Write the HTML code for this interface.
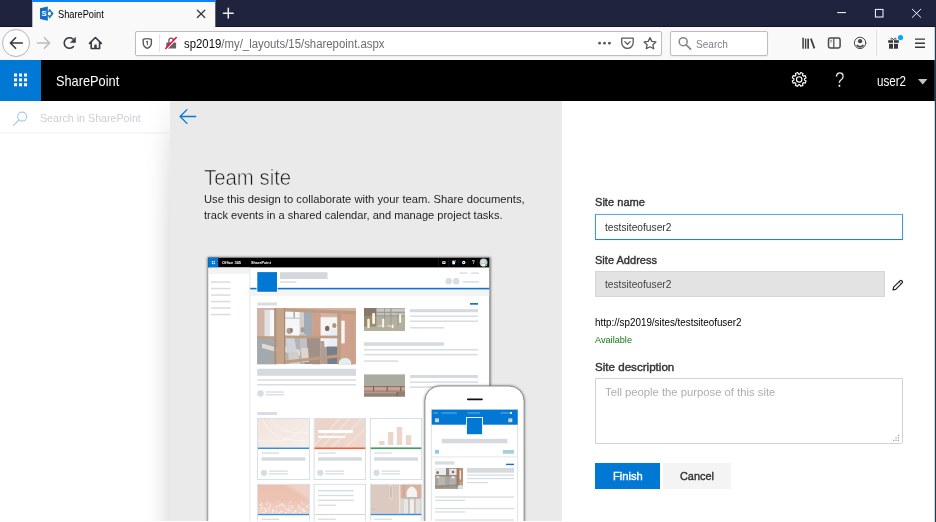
<!DOCTYPE html>
<html lang="en">
<head>
<meta charset="utf-8">
<title>SharePoint</title>
<style>
html,body{margin:0;padding:0;}
body{width:936px;height:522px;overflow:hidden;position:relative;background:#fff;
  font-family:"Liberation Sans",Arial,sans-serif;}
.abs{position:absolute;}
.t{position:absolute;white-space:nowrap;line-height:normal;transform-origin:0 0;}
/* ---------- browser chrome ---------- */
#tabbar{left:0;top:0;width:936px;height:27px;background:#20233e;}
#tabbar .edge{left:0;top:26px;width:936px;height:1px;background:#12142a;}
#tab{left:32px;top:0;width:183px;height:27px;background:#f9f9fa;transform:translateX(0.3px);}
#tab .line{left:0;top:0;width:183px;height:2px;background:#0a84ff;}
#toolbar{left:0;top:27px;width:936px;height:33px;background:#f9f9fa;}
#urlbar{left:134.8px;top:31px;width:524.8px;height:23px;border:1px solid #bdbdc0;border-radius:2px;background:#fff;
  box-shadow:0 1px 2px rgba(0,0,0,.06);}
#searchbar{left:669.8px;top:31px;width:95.8px;height:23px;border:1px solid #bdbdc0;border-radius:2px;background:#fff;
  box-shadow:0 1px 2px rgba(0,0,0,.06);}
#backbtn{left:2.2px;top:29.1px;width:25.8px;height:25.8px;border:0.8px solid #b4b4b6;border-radius:50%;background:#fdfdfd;}
/* ---------- SharePoint suite bar ---------- */
#suite{left:0;top:60px;width:936px;height:41px;background:#000;}
#waffle{left:0;top:60px;width:41px;height:41px;background:#0078d4;}
/* ---------- page ---------- */
#leftpane{left:0;top:101px;width:170px;height:421px;background:#fff;}
#srchline{left:0;top:132px;width:170px;height:2px;background:linear-gradient(90deg,#f3f8fc 0,#f3f8fc 140px,rgba(228,238,248,.75) 170px);}
#graypane{left:170px;top:101px;width:392px;height:521px;background:#eaeaea;box-shadow:0 0 24px rgba(0,0,0,.2);}
#shfade{left:138px;top:101px;width:32px;height:140px;background:linear-gradient(180deg,rgba(255,255,255,.72) 0,rgba(255,255,255,.63) 24px,rgba(255,255,255,.38) 39px,rgba(255,255,255,.21) 59px,rgba(255,255,255,.08) 95px,rgba(255,255,255,0) 140px);}
#rightpane{left:562px;top:101px;width:374px;height:421px;background:#fff;}
#botline{left:0;top:521px;width:936px;height:1px;background:#fdfdfd;}
#winedge{left:935px;top:27px;width:1px;height:495px;background:#1c3d52;}
#winedge2{left:934px;top:27px;width:1px;height:495px;background:rgba(120,140,150,.35);}
/* ---------- form ---------- */
#in1{left:594.6px;top:213.7px;width:306px;height:24px;border:1px solid #1c83d9;border-top-color:#5fa9e6;border-left-color:#3f97e0;border-right-color:#3f97e0;background:#fff;box-shadow:0 0 1px 0 rgba(60,150,225,.35);}
#in2{left:594.6px;top:271.4px;width:288.3px;height:24px;background:#e3e3e3;border:1px solid #d6d6d6;}
#ta{left:594.6px;top:378.3px;width:306.2px;height:63.4px;border:1px solid #d2d2d2;border-radius:0 0 1.5px 0;background:#fff;}
#finish{left:594.7px;top:463px;width:65.3px;height:25.9px;background:#0078d4;}
#cancel{left:663px;top:463px;width:68.4px;height:25.9px;background:#f4f4f4;}
svg{position:absolute;left:0;top:0;overflow:visible;}
</style>
</head>
<body>
<!-- Firefox chrome -->
<div id="tabbar" class="abs"><div class="edge abs"></div></div>
<div id="tab" class="abs"><div class="line abs"></div></div>
<div id="toolbar" class="abs"></div>
<div id="backbtn" class="abs"></div>
<div id="urlbar" class="abs"></div>
<div id="searchbar" class="abs"></div>
<!-- SharePoint suite bar -->
<div id="suite" class="abs"></div>
<div id="waffle" class="abs"></div>
<!-- page panes -->
<div id="leftpane" class="abs"></div>
<div id="graypane" class="abs"></div>
<div id="rightpane" class="abs"></div>
<div id="shfade" class="abs"></div>
<div id="srchline" class="abs"></div>
<!-- form -->
<div id="in1" class="abs"></div>
<div id="in2" class="abs"></div>
<div id="ta" class="abs"></div>
<div id="finish" class="abs"></div>
<div id="cancel" class="abs"></div>
<svg width="936" height="522" viewBox="0 0 936 522">
<defs>
  <filter id="b0" x="-30%" y="-30%" width="160%" height="160%"><feGaussianBlur stdDeviation="0.45"/></filter>
  <filter id="b1p" x="-10%" y="-10%" width="120%" height="120%"><feGaussianBlur stdDeviation="0.85"/></filter>
  <filter id="b1" x="-10%" y="-10%" width="120%" height="120%"><feGaussianBlur stdDeviation="0.7"/></filter>
  <filter id="b2" x="-10%" y="-10%" width="120%" height="120%"><feGaussianBlur stdDeviation="1.6"/></filter>
  <filter id="sh0" x="-10%" y="-10%" width="120%" height="120%"><feGaussianBlur stdDeviation="0.9"/></filter>
  <filter id="sh" x="-10%" y="-10%" width="120%" height="120%"><feGaussianBlur stdDeviation="1.4"/></filter>
  <clipPath id="cp1"><rect x="257.2" y="308" width="98.8" height="56.2"/></clipPath>
  <clipPath id="cp2"><rect x="364" y="308" width="41" height="22.8"/></clipPath>
  <clipPath id="cp3"><rect x="364" y="374.2" width="41" height="22.5"/></clipPath>
  <clipPath id="cpPage"><rect x="200" y="250" width="340" height="271.2"/></clipPath>
  <clipPath id="cpPh"><rect x="435" y="467.8" width="28" height="21"/></clipPath>
  <clipPath id="cpc1"><rect x="258" y="418.8" width="51" height="28.7"/></clipPath>
  <clipPath id="cpc2"><rect x="314.5" y="418.8" width="50.7" height="28.7"/></clipPath>
  <clipPath id="cpc4"><rect x="258" y="484.7" width="51" height="29.1"/></clipPath>
  <clipPath id="cpc6"><rect x="370.7" y="484.7" width="50.6" height="29.1"/></clipPath>
  <linearGradient id="g4" x1="0" y1="0" x2="0" y2="1"><stop offset="0" stop-color="#ecc0ae"/><stop offset="0.55" stop-color="#edc4b3"/><stop offset="1" stop-color="#f2d5ca"/></linearGradient>
  <linearGradient id="g1" x1="0" y1="0" x2="1" y2="1"><stop offset="0" stop-color="#f2e4dd"/><stop offset="1" stop-color="#f6efea"/></linearGradient>
  <linearGradient id="g2" x1="0" y1="0" x2="1" y2="0"><stop offset="0" stop-color="#edd3c8"/><stop offset="1" stop-color="#eed8ce"/></linearGradient>
</defs>
<g clip-path="url(#cpPage)">
<!-- desktop mock shadow + page -->
<rect x="207.3" y="257.1" width="283.4" height="270" fill="#000" opacity="0.5" filter="url(#sh0)"/>
<rect x="208.2" y="257.7" width="281" height="266" fill="#fff"/>
<rect x="208.2" y="257.7" width="281" height="9.7" fill="#000"/>
<rect x="208.2" y="257.7" width="10" height="9.7" fill="#0078d4"/>
<g fill="#fff"><rect x="211.9" y="261.1" width="1.2" height="1.2"/><rect x="213.7" y="261.1" width="1.2" height="1.2"/><rect x="211.9" y="262.9" width="1.2" height="1.2"/><rect x="213.7" y="262.9" width="1.2" height="1.2"/></g>
<!-- suite bar icons -->
<g stroke="#333" stroke-width="0.45"><path d="M438.5 258.5V266.5M448.6 258.5V266.5M458.2 258.5V266.5M468 258.5V266.5M477.6 258.5V266.5"/></g>
<rect x="442.3" y="261.3" width="3.2" height="2.6" fill="#fff"/><rect x="443.2" y="262.2" width="1.4" height="0.8" fill="#000"/>
<rect x="452.3" y="260.7" width="2.8" height="3.6" fill="#fff"/><circle cx="455" cy="261" r="1.1" fill="#2b88d8"/>
<circle cx="463.7" cy="262.5" r="1.7" fill="#fff"/><circle cx="463.7" cy="262.5" r="0.6" fill="#000"/>

<circle cx="483.6" cy="262.5" r="3.9" fill="#b9cdd0"/><circle cx="483.2" cy="261.6" r="1.7" fill="#e9e2d8"/><path d="M480.6 265.4Q483.4 262.6 486.4 265.4Q483.6 267.3 480.6 265.4Z" fill="#f3f3f0"/><circle cx="486.2" cy="265.2" r="1.1" fill="#5fb848"/>
<!-- left nav -->
<rect x="208.9" y="267.6" width="40.4" height="6.4" fill="#f3f3f3"/>
<rect x="249.5" y="267.4" width="0.7" height="256" fill="#dcdcdc"/>
<g fill="#d7dde2"><rect x="211" y="281.3" width="19.5" height="1.5"/><rect x="211" y="287.8" width="19.5" height="1.5"/><rect x="211" y="294.3" width="19.5" height="1.5"/><rect x="211" y="300.8" width="19.5" height="1.5"/><rect x="211" y="307.3" width="19.5" height="1.5"/><rect x="211" y="313.8" width="19.5" height="1.5"/></g>
<!-- site header -->
<rect x="250.2" y="289.4" width="239" height="6.6" fill="#f4f4f4"/>
<rect x="250.2" y="287.8" width="239" height="1.6" fill="#0b74d6"/>
<rect x="256.6" y="271.4" width="21" height="21" fill="#fff"/>
<rect x="257.3" y="272.1" width="19.7" height="19.7" fill="#0078d4"/>
<rect x="280" y="272.2" width="47.5" height="6.8" fill="#d3d8dc"/>
<rect x="280" y="281.3" width="16.5" height="1.5" fill="#d7dde2"/>
<g fill="#d7dde2"><rect x="459.5" y="272.4" width="8" height="1.4"/><rect x="471" y="272.4" width="8" height="1.4"/><circle cx="448.7" cy="281.3" r="3.2"/><circle cx="456.1" cy="281.3" r="3.2"/><rect x="463" y="281.2" width="16" height="1.5"/></g>
<!-- news section -->
<rect x="257.3" y="302.5" width="19.7" height="3" fill="#d7dde2"/>
<rect x="470" y="303" width="8" height="1.7" fill="#0b74d6"/>
<!-- photo 1: office -->
<g clip-path="url(#cp1)">
  <rect x="257.2" y="308" width="98.8" height="56.2" fill="#c9a493"/>
  <g filter="url(#b1)">
  <!-- left brick + lower left -->
  <rect x="256" y="307" width="9" height="31" fill="#c9a595"/>
  <rect x="256" y="338" width="21" height="27" fill="#93979c"/>
  <rect x="257" y="346" width="7" height="18" fill="#8e98a2"/>
  <path d="M262 343.5 L277 347.5 V352 L262 348Z" fill="#d9d3ca"/>
  <!-- window 1 -->
  <rect x="264.5" y="310" width="5" height="27" fill="#d9dde0"/>
  <rect x="269.5" y="310" width="5" height="27" fill="#f5f7f9"/>
  <!-- window 2 -->
  <rect x="285" y="311" width="16.4" height="25" fill="#f3f5f7"/>
  <rect x="293.4" y="311" width="1.6" height="7.4" fill="#98a0ac"/>
  <rect x="285" y="317.6" width="16.4" height="1.2" fill="#b4bcc4"/>
  <rect x="299.6" y="312" width="4.6" height="24" fill="#c9c4c0"/>
  <!-- dark column + brick -->
  <rect x="304" y="312" width="8.2" height="24.6" fill="#8e9aa6"/>
  <rect x="312.2" y="312" width="8.6" height="53" fill="#c48d74"/>
  <rect x="304" y="338" width="16" height="26" fill="#8f7a70"/>
  <!-- lower centre -->
  <rect x="285" y="338" width="19.5" height="26" fill="#a6a3a4"/>
  <path d="M284.6 346 L300 350 V356 L284.6 352Z" fill="#d9d3ca"/>
  <!-- whiteboard -->
  <rect x="320.6" y="317.2" width="17" height="23.8" fill="#f3f3f1"/>
  <rect x="320.6" y="341" width="17" height="23" fill="#a08c82"/>
  <!-- brick right + door glass -->
  <rect x="340.6" y="312" width="16" height="53" fill="#c78f75"/>
  <rect x="341.3" y="320.6" width="3.4" height="22.8" fill="#f4f4f4"/>
  <!-- people left -->
  <ellipse cx="289.2" cy="330.8" rx="2.7" ry="3.1" fill="#a58b7e"/>
  <path d="M285.4 335.4 H294 L297 353 H287Z" fill="#c6cad3"/>
  <ellipse cx="291.4" cy="330.4" rx="1.5" ry="2.3" fill="#7a665d"/>
  <ellipse cx="302.6" cy="329.8" rx="2" ry="2.7" fill="#9a877f"/>
  <path d="M299.4 334 H306.4 L307.6 352 H300.4Z" fill="#b4b6bc"/>
  <path d="M301 348 H308 L309 362 H302Z" fill="#d6cec4"/>
  <path d="M288 352 H298 L300 364 H289Z" fill="#c9c3bd"/>
  <!-- people right -->
  <ellipse cx="327.2" cy="328.4" rx="2.2" ry="2.7" fill="#644a3e"/>
  <ellipse cx="334.3" cy="325.5" rx="2.1" ry="2.6" fill="#a07c69"/>
  <path d="M323.4 332.6 H331 L330.4 347 H324.6Z" fill="#eef0f4"/>
  <path d="M330 329.6 H338.2 L337.6 347 H329.6Z" fill="#e3ebf3"/>
  <path d="M326.6 346.6 H337.6 V364 H327.6Z" fill="#5d6571"/>
  </g>
  <g filter="url(#b0)">
  <!-- wooden frames -->
  <rect x="274.2" y="308" width="2.4" height="56.2" fill="#a07a5d"/>
  <rect x="276.6" y="308" width="7.4" height="56.2" fill="#b99273"/>
  <rect x="284" y="308" width="1.2" height="56.2" fill="#987254"/>
  <path d="M285 308.2 L356 311 L356 314.6 L285 311.4Z" fill="#b18867"/>
  <rect x="257.2" y="336.2" width="17.4" height="2.4" fill="#b18867"/>
  <rect x="285" y="335.6" width="53" height="2.7" fill="#b38a69"/>
  <path d="M285 360.6 L338 354.6 L338 357.4 L285 363.6Z" fill="#b18867"/>
  <rect x="337.3" y="313" width="3.6" height="52" fill="#b08868"/>
  <rect x="351.3" y="317" width="1.8" height="48" fill="#b89070"/>
  <ellipse cx="345" cy="363" rx="6.2" ry="5" fill="#d9ecf0"/>
  </g>
  <rect x="257.2" y="308" width="98.8" height="56.2" fill="#fff" opacity="0.17"/>
</g>
<rect x="257.2" y="368.8" width="98.8" height="7" fill="#d5dade"/>
<g fill="#d7dde2"><rect x="257.2" y="379.3" width="98.8" height="1.5"/><rect x="257.2" y="384" width="98.8" height="1.5"/><circle cx="260.5" cy="393.5" r="3.2"/><rect x="265.7" y="391.4" width="18.3" height="1.3"/><rect x="265.7" y="394.1" width="18.3" height="1.3"/></g>
<!-- photo 2: lamps -->
<g clip-path="url(#cp2)">
  <rect x="364" y="308" width="41" height="22.8" fill="#978b74"/>
  <g filter="url(#b1)">
  <rect x="364" y="308" width="12.6" height="8" fill="#85796a"/>
  <rect x="376.4" y="308" width="29" height="19" fill="#b3afa3"/>
  <rect x="376.8" y="309.2" width="13.4" height="2.4" fill="#c8ccd0"/><rect x="391.6" y="309.2" width="13.4" height="2.4" fill="#c8ccd0"/>
  <rect x="376.8" y="313" width="13.4" height="2" fill="#bfc2c4"/><rect x="391.6" y="313" width="13.4" height="2" fill="#bfc2c4"/>
  <path d="M376.4 312.3H406M376.4 316H406M384.6 308V326M390.9 308V326M398 312V326" stroke="#97917f" stroke-width="0.7"/>
  <rect x="364" y="326.6" width="41" height="4.6" fill="#b3ad9a"/>
  <rect x="377.4" y="325.2" width="4.6" height="1.5" fill="#d2d2ca"/><rect x="387" y="325.2" width="4" height="1.5" fill="#d2d2ca"/>
  </g>
  <g filter="url(#b0)" fill="#fff4dc">
  <rect x="367.3" y="318.8" width="2.4" height="9.2" rx="1"/><rect x="372.2" y="313" width="2.8" height="11" rx="1"/><rect x="382.1" y="318.8" width="2.2" height="8.8" rx="1"/><rect x="399.1" y="313.9" width="2" height="9" rx="1"/><rect x="391.7" y="324.4" width="1.8" height="3.8" rx="0.8"/>
  </g>
</g>
<g fill="#d7dde2"><rect x="410" y="309.2" width="68" height="3" fill="#d5dade"/><rect x="410" y="315.5" width="68" height="1.5"/><rect x="410" y="320.5" width="68" height="1.5"/><rect x="410" y="327" width="34" height="1.5"/>
<rect x="364" y="342.3" width="79.8" height="3.5" fill="#d5dade"/><rect x="364" y="349" width="114" height="1.5"/><rect x="364" y="353.9" width="114" height="1.5"/><rect x="364" y="360.3" width="34" height="1.5"/>
<rect x="410" y="375" width="68" height="3" fill="#d5dade"/><rect x="410" y="381.4" width="68" height="1.5"/><rect x="410" y="386.4" width="68" height="1.5"/></g>
<!-- photo 3: wall + bricks -->
<g clip-path="url(#cp3)">
  <rect x="364" y="374.2" width="41" height="22.5" fill="#a8aca0"/>
  <g filter="url(#b0)">
  <rect x="363" y="386.2" width="43" height="5.4" fill="#c09182"/>
  <rect x="363" y="387.6" width="43" height="2" fill="#d0a595"/>
  <rect x="363" y="386" width="43" height="1" fill="#86766c"/>
  <rect x="363" y="391.4" width="43" height="6" fill="#8f7f77"/>
  <rect x="363" y="392.2" width="34" height="1.1" fill="#b5a198"/>
  <rect x="363" y="395.8" width="43" height="1.2" fill="#a88a80"/>
  <g fill="#6f5f57"><rect x="373" y="386.4" width="1.1" height="5"/><rect x="386.6" y="386.4" width="1.1" height="5"/><rect x="400.2" y="386.4" width="1.1" height="5"/><rect x="396.6" y="392" width="1" height="4"/></g>
  </g>
</g>
<!-- cards -->
<rect x="257.3" y="412" width="19.7" height="3" fill="#d7dde2"/>
<g fill="#fff" stroke="#cfd8e2" stroke-width="0.8">
<rect x="257.6" y="418.4" width="51.8" height="61.2"/><rect x="314.1" y="418.4" width="51.5" height="61.2"/><rect x="370.3" y="418.4" width="51.4" height="61.2"/>
<rect x="257.6" y="484.3" width="51.8" height="45"/><rect x="314.1" y="484.3" width="51.5" height="45"/><rect x="370.3" y="484.3" width="51.4" height="45"/>
</g>
<g clip-path="url(#cpc1)"><rect x="258" y="418.8" width="51" height="28.8" fill="url(#g1)"/>
<path d="M262 418 Q272 444 310 440 M258 440 Q290 446 309 424 M270 418 Q280 436 310 432" stroke="#fbf4f0" stroke-width="0.8" fill="none"/></g>
<g clip-path="url(#cpc2)"><rect x="314.5" y="418.8" width="50.7" height="28.8" fill="url(#g2)"/>
<path d="M314 446 Q330 430 340 418 M320 448 Q338 432 350 418 M330 448 Q348 434 362 418 M344 448 Q356 438 366 428" stroke="#f3e1d9" stroke-width="1.6" fill="none"/></g>
<rect x="318" y="430" width="35" height="3" fill="#fff"/><rect x="318" y="435.9" width="27.4" height="1.9" fill="#fff"/>
<g fill="#ecd6cb"><rect x="379.1" y="441" width="5.4" height="4"/><rect x="388" y="432" width="5.4" height="13"/><rect x="396.8" y="427" width="5.4" height="18"/><rect x="405.8" y="435.2" width="5.4" height="9.8"/></g>
<rect x="258" y="447.5" width="51" height="1.5" fill="#3a8bd9"/><rect x="314.5" y="447.4" width="50.7" height="1.7" fill="#e8623e"/><rect x="370.7" y="447.4" width="50.6" height="1.7" fill="#3f9e5e"/>
<g fill="#d7dde2">
<rect x="261.5" y="452.4" width="17.6" height="1.3"/><rect x="261.5" y="457.3" width="43.8" height="3.4" fill="#d5dade"/><circle cx="264" cy="472.8" r="3.1"/><rect x="269" y="470.5" width="18.7" height="1.3"/><rect x="269" y="473.2" width="18.7" height="1.3"/>
<rect x="318" y="452.4" width="17.6" height="1.3"/><rect x="318" y="457.3" width="43.8" height="3.4" fill="#d5dade"/><circle cx="320.3" cy="472.8" r="3.1"/><rect x="325.2" y="470.5" width="18.7" height="1.3"/><rect x="325.2" y="473.2" width="18.7" height="1.3"/>
<rect x="374.2" y="452.4" width="17.6" height="1.3"/><rect x="374.2" y="457.3" width="43.8" height="3.4" fill="#d5dade"/><circle cx="376.5" cy="472.8" r="3.1"/><rect x="381.4" y="470.5" width="18.7" height="1.3"/><rect x="381.4" y="473.2" width="18.7" height="1.3"/>
</g>
<!-- row 2 -->
<g clip-path="url(#cpc4)"><rect x="258" y="484.7" width="51" height="29.2" fill="url(#g4)"/><path d="M285 484 H310 V500 Z" fill="#f4ddd4" opacity="0.6" filter="url(#b2)"/>
<g fill="#fff" opacity="0.85"><circle cx="262" cy="508" r="0.8"/><circle cx="266" cy="511" r="0.9"/><circle cx="270" cy="506" r="0.7"/><circle cx="273" cy="510.5" r="0.9"/><circle cx="277" cy="507" r="0.8"/><circle cx="281" cy="511.6" r="0.9"/><circle cx="284" cy="505.4" r="0.7"/><circle cx="288" cy="509.6" r="0.9"/><circle cx="292" cy="506.6" r="0.8"/><circle cx="295.6" cy="511" r="0.9"/><circle cx="299" cy="507.4" r="0.8"/><circle cx="303" cy="510.4" r="0.9"/><circle cx="306.6" cy="506" r="0.8"/><circle cx="268" cy="502" r="0.6"/><circle cx="279" cy="501.6" r="0.6"/><circle cx="290" cy="502.4" r="0.6"/><circle cx="301" cy="501.8" r="0.6"/><circle cx="264" cy="512.6" r="0.8"/><circle cx="286" cy="512.8" r="0.8"/><circle cx="300" cy="512.8" r="0.8"/><circle cx="270.3" cy="504.1" r="0.59"/><circle cx="266.2" cy="503.7" r="0.59"/><circle cx="304.4" cy="511.3" r="0.72"/><circle cx="269.6" cy="508.6" r="0.55"/><circle cx="267.1" cy="504.1" r="0.53"/><circle cx="304.9" cy="511.6" r="0.73"/><circle cx="298.5" cy="505.0" r="0.56"/><circle cx="289.8" cy="510.6" r="0.75"/><circle cx="302.5" cy="503.9" r="0.66"/><circle cx="292.1" cy="508.3" r="0.51"/><circle cx="282.2" cy="503.9" r="0.78"/><circle cx="301.8" cy="508.7" r="0.56"/><circle cx="303.9" cy="509.0" r="0.76"/><circle cx="300.9" cy="508.3" r="0.59"/><circle cx="288.4" cy="507.5" r="0.51"/><circle cx="273.8" cy="511.5" r="0.47"/><circle cx="260.8" cy="509.5" r="0.55"/><circle cx="285.2" cy="507.9" r="0.57"/><circle cx="308.4" cy="505.0" r="0.59"/><circle cx="268.6" cy="509.6" r="0.55"/><circle cx="276.3" cy="510.8" r="0.56"/><circle cx="286.4" cy="512.4" r="0.49"/><circle cx="261.6" cy="505.4" r="0.72"/><circle cx="289.3" cy="505.5" r="0.57"/><circle cx="267.4" cy="507.8" r="0.46"/><circle cx="293.4" cy="512.3" r="0.78"/><circle cx="295.2" cy="513.0" r="0.46"/><circle cx="272.9" cy="513.0" r="0.72"/><circle cx="279.0" cy="512.8" r="0.67"/><circle cx="299.4" cy="506.1" r="0.52"/><circle cx="280.7" cy="504.4" r="0.58"/><circle cx="306.6" cy="506.4" r="0.45"/><circle cx="260.7" cy="504.8" r="0.72"/><circle cx="276.6" cy="506.0" r="0.48"/><circle cx="307.6" cy="507.4" r="0.52"/><circle cx="261.5" cy="503.6" r="0.51"/><circle cx="292.3" cy="504.6" r="0.46"/><circle cx="283.0" cy="505.6" r="0.80"/><circle cx="264.6" cy="508.5" r="0.72"/><circle cx="279.0" cy="513.3" r="0.62"/><circle cx="270.6" cy="507.3" r="0.46"/><circle cx="279.6" cy="505.6" r="0.76"/><circle cx="300.1" cy="498.5" r="0.31" opacity="0.6"/><circle cx="271.2" cy="496.2" r="0.34" opacity="0.6"/><circle cx="270.1" cy="501.8" r="0.33" opacity="0.6"/><circle cx="261.1" cy="502.4" r="0.41" opacity="0.6"/><circle cx="308.0" cy="497.6" r="0.48" opacity="0.6"/><circle cx="291.2" cy="501.1" r="0.45" opacity="0.6"/><circle cx="283.2" cy="494.8" r="0.34" opacity="0.6"/><circle cx="302.2" cy="502.1" r="0.48" opacity="0.6"/><circle cx="275.3" cy="499.9" r="0.46" opacity="0.6"/><circle cx="290.6" cy="501.3" r="0.41" opacity="0.6"/><circle cx="291.2" cy="500.2" r="0.35" opacity="0.6"/><circle cx="304.6" cy="502.6" r="0.31" opacity="0.6"/><circle cx="307.1" cy="502.7" r="0.43" opacity="0.6"/><circle cx="260.7" cy="502.1" r="0.33" opacity="0.6"/><circle cx="306.9" cy="500.0" r="0.31" opacity="0.6"/><circle cx="266.9" cy="499.7" r="0.41" opacity="0.6"/><circle cx="295.8" cy="502.3" r="0.34" opacity="0.6"/><circle cx="258.7" cy="502.3" r="0.30" opacity="0.6"/></g></g>
<g fill="#d7dde2"><rect x="318" y="490" width="35.6" height="1.4"/><rect x="318" y="494.8" width="35.6" height="1.4"/><rect x="318" y="499.6" width="35.6" height="1.4"/><rect x="318" y="504.6" width="18" height="1.4"/></g>
<rect x="314.5" y="514" width="50.7" height="0.9" fill="#c9ced3"/>
<g clip-path="url(#cpc6)"><rect x="370.7" y="484.7" width="50.6" height="29.2" fill="#dcc9c0"/>
<g filter="url(#b0)"><rect x="400" y="484" width="22" height="14" fill="#d9b3a0"/><rect x="399.2" y="484" width="1.2" height="30" fill="#f1ece8"/><rect x="403" y="484" width="1.4" height="13" fill="#c9a898"/>
<rect x="389" y="485.4" width="3.6" height="13.6" fill="#e6d8d0"/><rect x="389.8" y="486.4" width="2" height="11.4" fill="#d0bcb2"/>
<path d="M406.6 497.6 V491.4 Q411.8 481.6 417 491.4 V497.6Z" fill="#f3f3f1"/>
<rect x="401" y="497.4" width="20.6" height="16.6" fill="#d9d5d1"/><rect x="401" y="497.2" width="20.6" height="1.2" fill="#b9aea8"/>
<rect x="404" y="499.6" width="4.4" height="14" fill="#e9e7e4"/><rect x="409.8" y="499.6" width="4.4" height="14" fill="#f0efed"/><rect x="415.8" y="499.6" width="4" height="14" fill="#e4e0dc"/>
<path d="M408.9 498V514M414.8 498V514" stroke="#b5aaa4" stroke-width="0.8"/>
<rect x="371" y="508.4" width="4.4" height="1.6" fill="#c4c4c8"/></g></g>
<rect x="258" y="513.8" width="51" height="1.4" fill="#3a8bd9"/><rect x="370.7" y="513.8" width="50.6" height="1.4" fill="#3a8bd9"/>
<g fill="#d7dde2"><rect x="261.5" y="518.6" width="17.6" height="1.3"/><rect x="318" y="518.6" width="17.6" height="1.3"/><rect x="374.2" y="518.6" width="17.6" height="1.3"/></g>
<!-- right edge shadow of desktop mock -->
<!-- phone -->
<rect x="423.9" y="385.2" width="101.2" height="150" rx="16" fill="#000" opacity="0.34" filter="url(#sh0)"/>
<rect x="424.9" y="386" width="99.2" height="150" rx="15" fill="#fff" stroke="#8e8e8e" stroke-width="1"/>
<rect x="467" y="398.6" width="15.8" height="1.6" rx="0.8" fill="#111"/>
<rect x="431.7" y="409.7" width="86" height="120" fill="#fff" stroke="#d6d6d6" stroke-width="0.7"/>
<rect x="431.7" y="409.7" width="86" height="15" fill="#0078d4"/>
<g fill="#58a8e8"><rect x="433.4" y="412.4" width="4.6" height="1.2"/><rect x="441.4" y="412.4" width="15.4" height="1.2"/><rect x="467.6" y="412.4" width="12.6" height="1.2"/><rect x="500.6" y="412.4" width="8" height="1.2"/></g>
<rect x="509.8" y="412.1" width="2.2" height="1.7" fill="#fff"/>
<rect x="435" y="418.4" width="4" height="3.8" fill="#cfd4d8"/><rect x="508.3" y="418.4" width="4" height="3.8" fill="#cfd4d8"/>
<rect x="466" y="417" width="17" height="18.1" fill="#fff"/>
<rect x="466.9" y="417.9" width="15.2" height="16.3" fill="#0078d4"/>
<rect x="441.7" y="438.8" width="65.8" height="4.5" fill="#d5dade"/>
<rect x="435" y="450" width="4" height="3.7" fill="#8ec6ee"/><rect x="502.8" y="450" width="11.2" height="3.7" fill="#a3d1dd"/>
<rect x="432" y="456.2" width="85.4" height="1.3" fill="#ececec"/>
<rect x="435" y="461.3" width="19.5" height="3.3" fill="#d7dde2"/>
<rect x="506" y="463.7" width="8" height="1.4" fill="#0b74d6"/>
<g clip-path="url(#cpPh)"><rect x="435" y="467.8" width="28" height="21" fill="#b9a293"/>
<g filter="url(#b0)"><rect x="435" y="468" width="11" height="8" fill="#e9ecec"/><rect x="449" y="469" width="8" height="7" fill="#e4e6e6"/><rect x="446" y="468" width="3.2" height="21" fill="#8f8a86"/>
<rect x="435" y="476.6" width="22" height="9" fill="#a3a5a5"/><rect x="438" y="477" width="7" height="8" fill="#b9b6b0"/><rect x="449.6" y="477" width="6" height="8" fill="#aeb0b2"/>
<rect x="435" y="486.4" width="23" height="3" fill="#8d9aa0"/>
<ellipse cx="437.6" cy="472.6" rx="1.2" ry="1.6" fill="#7d6a60"/><ellipse cx="453" cy="472" rx="1.2" ry="1.5" fill="#7d6a60"/><rect x="436.6" y="474" width="2.6" height="4" fill="#dfe3e8"/><rect x="451.6" y="473.4" width="3" height="5" fill="#e6e9ee"/>
<rect x="435" y="475" width="22" height="1.2" fill="#a98465"/><path d="M435 485.8 L457 484.4 V485.8 L435 487.2Z" fill="#a98465"/>
<rect x="456.6" y="468" width="2.6" height="21" fill="#a47c5e"/>
<rect x="459.2" y="468" width="4" height="14" fill="#b98f78"/><rect x="459.6" y="470.4" width="1.4" height="9" fill="#e9e9e9"/><ellipse cx="460.4" cy="487.4" rx="2.8" ry="2.4" fill="#d4e6ea"/></g></g>
<g fill="#d7dde2"><rect x="467" y="468" width="47" height="4.7" fill="#d5dade"/><rect x="467" y="474.4" width="47" height="1.3"/><rect x="467" y="477.9" width="47" height="1.3"/><rect x="467" y="481.9" width="21" height="1.3"/>
<rect x="435" y="496.4" width="79" height="1.3"/><rect x="435" y="499.7" width="30" height="1.3"/><rect x="435" y="507.9" width="79" height="1.3"/><rect x="435" y="511.3" width="30" height="1.3"/><rect x="435" y="519.4" width="79" height="1.3"/></g>
</g>
</svg>

<svg width="936" height="522" viewBox="0 0 936 522" fill="none" stroke-linecap="round" stroke-linejoin="round">
<!-- tab favicon: SharePoint logo -->
<g>
  <path d="M47.7 13.6 L49.6 9.6 L52.9 13.6 L49.6 17.7 Z" fill="#f9f9fa" stroke="#0f6fc6" stroke-width="1.1"/>
  <circle cx="49.3" cy="13.6" r="2.3" fill="#f9f9fa" stroke="#0f6fc6" stroke-width="0.9"/>
  <path d="M40 8.2 L47.8 6.6 L47.8 20.8 L40 19.1 Z" fill="#0f6fc6" stroke="none"/>
  <text x="41.4" y="16.3" font-family="Liberation Sans, Arial, sans-serif" font-size="7.6" font-weight="700" fill="#ffffff" stroke="none">S</text>
</g>
<!-- tab close / new tab -->
<path d="M197.4 10.2 L204.8 17.5 M204.8 10.2 L197.4 17.5" stroke="#38383d" stroke-width="1.25"/>
<path d="M223.4 13.2 H233.2 M228.3 8.3 V18.1" stroke="#f0f0f4" stroke-width="1.5"/>
<!-- window controls -->
<path d="M837.2 12.6 H846" stroke="#fff" stroke-width="1" stroke-linecap="butt"/>
<rect x="875.4" y="9.4" width="7.6" height="7.6" stroke="#fff" stroke-width="1" stroke-linejoin="miter"/>
<path d="M912.3 9.2 L920.8 17.4 M920.8 9.2 L912.3 17.4" stroke="#fff" stroke-width="0.95"/>
<!-- nav buttons -->
<path d="M22.3 43 H10.6 M15.6 37.8 L10.4 43 L15.6 48.3" stroke="#38383d" stroke-width="1.6"/>
<path d="M37.4 43 H49.4 M44.4 37.8 L49.6 43 L44.4 48.3" stroke="#bcbcbe" stroke-width="1.6"/>
<path d="M73.5 46.5 A5.3 5.3 0 1 1 73 39" stroke="#38383d" stroke-width="1.55"/>
<path d="M75.5 37.4 V42.6 H70.6 Z" stroke="#38383d" stroke-width="0.5" fill="#38383d"/>
<path d="M89.5 43.4 L95.4 37.5 L101.3 43.4 M91.2 42.6 V48.5 H99.6 V42.6" stroke="#38383d" stroke-width="1.6"/>
<rect x="94.3" y="44.6" width="2.4" height="4" fill="#38383d" stroke="none"/>
<!-- url bar: shield, separator, insecure lock -->
<path d="M143.2 39.4 Q147.3 37.9 151.4 39.4 V42.8 C151.4 45.8 149.6 47.5 147.3 48.4 C145 47.5 143.2 45.8 143.2 42.8 Z" stroke="#55555a" stroke-width="1.35"/>
<path d="M146.5 41.7 L147.4 41.2 V44.8" stroke="#55555a" stroke-width="1.05"/>
<path d="M159.5 34 V52" stroke="#e3e3e6" stroke-width="1" stroke-linecap="butt"/>
<rect x="166.3" y="42.4" width="9.8" height="6.2" rx="0.9" fill="#636367" stroke="none"/>
<path d="M168.9 42.6 V40.4 A2.3 2.3 0 0 1 173.5 40.4 V42.6" stroke="#636367" stroke-width="1.4"/>
<path d="M166.6 49 L177.2 38" stroke="#ffffff" stroke-width="1.3"/>
<path d="M165.7 48.4 L176.3 37.4" stroke="#ff0039" stroke-width="1.45"/>
<!-- page actions -->
<circle cx="599.6" cy="43.2" r="1.4" fill="#5a5a5e"/><circle cx="604.5" cy="43.2" r="1.4" fill="#5a5a5e"/><circle cx="609.4" cy="43.2" r="1.4" fill="#5a5a5e"/>
<path d="M621.7 38.2 H633.2 V42.6 A5.75 5.75 0 0 1 621.7 42.6 Z" stroke="#5a5a5e" stroke-width="1.3"/>
<path d="M624.8 41.6 L627.4 44.2 L630.1 41.6" stroke="#5a5a5e" stroke-width="1.3"/>
<path d="M650 37.6 L651.8 41.4 L655.9 41.9 L652.9 44.7 L653.7 48.8 L650 46.8 L646.3 48.8 L647.1 44.7 L644.1 41.9 L648.2 41.4 Z" stroke="#5a5a5e" stroke-width="1.3"/>
<!-- search bar magnifier -->
<circle cx="683.2" cy="41.7" r="4" stroke="#85858a" stroke-width="1.5"/>
<path d="M686.2 44.8 L690.6 49.2" stroke="#85858a" stroke-width="1.7"/>
<!-- library, sidebar, account, gift, menu -->
<g fill="#3e3e43" stroke="none"><rect x="802.3" y="37.7" width="1.5" height="11"/><rect x="804.9" y="38.6" width="1.4" height="10.1"/><rect x="807.3" y="38.6" width="1.7" height="10.1"/></g>
<path d="M810.9 38.6 L814.4 48.4" stroke="#3e3e43" stroke-width="1.75" stroke-linecap="butt"/>
<rect x="828.5" y="38.1" width="11.6" height="9.9" rx="1.7" stroke="#48484d" stroke-width="1.5"/>
<path d="M833.8 38.4 V47.8" stroke="#48484d" stroke-width="1.2" stroke-linecap="butt"/>
<path d="M830.4 40.4 H831.8 M830.4 42 H831.8" stroke="#6a6a6e" stroke-width="0.7"/>
<circle cx="860.1" cy="42.9" r="5.7" stroke="#48484d" stroke-width="1"/>
<circle cx="860.1" cy="41.2" r="2.15" fill="#48484d"/>
<path d="M856.7 45.2 Q860.1 48.4 863.5 45.2" stroke="#48484d" stroke-width="1.7" stroke-linecap="butt"/>
<path d="M876.5 29.5 V56" stroke="#e2e2e5" stroke-width="1" stroke-linecap="butt"/>
<rect x="888.2" y="40.2" width="10.6" height="2.6" fill="#38383d"/>
<rect x="889" y="43.8" width="9" height="4.9" fill="#38383d"/>
<path d="M893.5 40 V48.7" stroke="#f9f9fa" stroke-width="1" stroke-linecap="butt"/>
<path d="M893.5 39.8 C892 37.2 890.4 38 891 39.4 M893.5 39.8 C895 37.2 896.6 38 896 39.4" stroke="#38383d" stroke-width="1"/>
<circle cx="900.5" cy="37.6" r="2.6" fill="#0aa5f5"/>
<path d="M915 39.1 H925 M915 43.2 H925 M915 47.3 H925" stroke="#38383d" stroke-width="1.4" stroke-linecap="butt"/>
<!-- suite bar: waffle dots -->
<g fill="#fff">
<rect x="14.0" y="73.5" width="3.05" height="3.05"/><rect x="19.0" y="73.5" width="3.05" height="3.05"/><rect x="24.0" y="73.5" width="3.05" height="3.05"/><rect x="14.0" y="78.35" width="3.05" height="3.05"/><rect x="19.0" y="78.35" width="3.05" height="3.05"/><rect x="24.0" y="78.35" width="3.05" height="3.05"/><rect x="14.0" y="83.2" width="3.05" height="3.05"/><rect x="19.0" y="83.2" width="3.05" height="3.05"/><rect x="24.0" y="83.2" width="3.05" height="3.05"/>
</g>
<!-- suite bar: gear -->
<g stroke="#fff" stroke-width="1.15" stroke-linejoin="round">
<circle cx="799.2" cy="79.4" r="2.7"/>
<path d="M800.74 72.47 L803.01 73.41 L802.46 75.22 L803.38 76.14 L805.19 75.59 L806.13 77.86 L804.46 78.75 L804.46 80.05 L806.13 80.94 L805.19 83.21 L803.38 82.66 L802.46 83.58 L803.01 85.39 L800.74 86.33 L799.85 84.66 L798.55 84.66 L797.66 86.33 L795.39 85.39 L795.94 83.58 L795.02 82.66 L793.21 83.21 L792.27 80.94 L793.94 80.05 L793.94 78.75 L792.27 77.86 L793.21 75.59 L795.02 76.14 L795.94 75.22 L795.39 73.41 L797.66 72.47 L798.55 74.14 L799.85 74.14 Z"/>
</g>
<path d="M918 78.9 H927.4 L922.7 84.4 Z" fill="#c4c4c4"/>
<!-- left pane search icon -->
<circle cx="22.2" cy="116.6" r="4.5" stroke="#a4c9e8" stroke-width="1.1"/>
<path d="M18.9 120 L13.5 125.3" stroke="#a4c9e8" stroke-width="1.1"/>
<!-- back arrow -->
<path d="M195.7 116.5 H180.4 M187 109.6 L180.1 116.5 L187 123.4" stroke="#0078d4" stroke-width="1.3"/>
<!-- pencil -->
<path d="M893 289.9 L893.6 287.2 L900 280.8 Q901 280 902 281 Q903 282 902.1 282.9 L895.7 289.3 Z" stroke="#222" stroke-width="1.2"/>
<path d="M899.2 281.8 L901.2 283.8" stroke="#333" stroke-width="0.8"/>
<!-- textarea grip -->
<g fill="#8a8a8a"><rect x="897.9" y="434.8" width="1.1" height="1.1"/><rect x="897.9" y="437.3" width="1.1" height="1.1"/><rect x="897.9" y="439.8" width="1.1" height="1.1"/><rect x="895.5" y="437.3" width="1.1" height="1.1"/><rect x="895.5" y="439.8" width="1.1" height="1.1"/><rect x="893.1" y="439.8" width="1.1" height="1.1"/></g>
</svg>

<div id="t_tab" class="t" style="left:58.20px;top:8.01px;font-size:10.6px;color:#000000;transform:scaleX(0.8737);">SharePoint</div>
<div id="t_url" class="t" style="left:184.30px;top:36.87px;font-size:12.3px;color:#6c6c70;transform:scaleX(0.9252);"><span style="color:#0c0c0d">sp2019</span>/my/_layouts/15/sharepoint.aspx</div>
<div id="t_srch" class="t" style="left:696.00px;top:37.41px;font-size:11.7px;color:#808084;transform:scaleX(0.8638);">Search</div>
<div id="t_hdr" class="t" style="left:56.40px;top:72.79px;font-size:14.6px;color:#ffffff;transform:scaleX(0.8751);">SharePoint</div>
<div id="t_user" class="t" style="left:876.70px;top:72.65px;font-size:14.2px;color:#ffffff;transform:scaleX(0.8197);">user2</div>
<div id="t_q" class="t" style="left:835.00px;top:67.63px;font-size:21.4px;color:#ffffff;transform:scaleX(0.7895);-webkit-text-stroke:0.35px #000;">?</div>
<div id="t_sis" class="t" style="left:40.20px;top:111.10px;font-size:11.6px;color:#cccfd3;transform:scaleX(0.9199);">Search in SharePoint</div>
<div id="t_team" class="t" style="left:203.80px;top:165.07px;font-size:21.8px;color:#161616;transform:scaleX(0.9348);-webkit-text-stroke:0.6px #eaeaea;">Team site</div>
<div id="t_d1" class="t" style="left:204.30px;top:192.99px;font-size:11.5px;color:#1f1f1f;transform:scaleX(0.9761);">Use this design to collaborate with your team. Share documents,</div>
<div id="t_d2" class="t" style="left:204.30px;top:208.89px;font-size:11.5px;color:#1f1f1f;transform:scaleX(0.9628);">track events in a shared calendar, and manage project tasks.</div>
<div id="t_l1" class="t" style="left:595.10px;top:196.08px;font-size:11.4px;color:#333333;transform:scaleX(0.9747);-webkit-text-stroke:0.4px #333;">Site name</div>
<div id="t_i1" class="t" style="left:605.00px;top:219.90px;font-size:11.6px;color:#333333;transform:scaleX(0.8806);">testsiteofuser2</div>
<div id="t_l2" class="t" style="left:595.10px;top:253.88px;font-size:11.4px;color:#333333;transform:scaleX(0.9695);-webkit-text-stroke:0.4px #333;">Site Address</div>
<div id="t_i2" class="t" style="left:605.00px;top:277.30px;font-size:11.6px;color:#444444;transform:scaleX(0.8806);">testsiteofuser2</div>
<div id="t_http" class="t" style="left:594.80px;top:316.68px;font-size:10.3px;color:#000000;transform:scaleX(0.9550);">http://sp2019/sites/testsiteofuser2</div>
<div id="t_av" class="t" style="left:594.80px;top:335.08px;font-size:9.3px;color:#0f7b0f;transform:scaleX(0.9850);">Available</div>
<div id="t_l3" class="t" style="left:595.10px;top:360.78px;font-size:11.4px;color:#333333;transform:scaleX(1.0181);-webkit-text-stroke:0.4px #333;">Site description</div>
<div id="t_ph" class="t" style="left:605.00px;top:385.99px;font-size:11.5px;color:#adadad;transform:scaleX(0.9794);">Tell people the purpose of this site</div>
<div id="t_m365" class="t" style="left:221.90px;top:260.30px;font-size:4.2px;color:#ffffff;transform:scaleX(0.9535);font-weight:700;">Office 365</div>
<div id="t_msp" class="t" style="left:251.00px;top:260.30px;font-size:4.2px;color:#ffffff;transform:scaleX(0.9001);font-weight:700;">SharePoint</div>
<div id="t_mq" class="t" style="left:472.30px;top:259.94px;font-size:4.6px;color:#ffffff;transform:scaleX(0.9600);font-weight:700;">?</div>
<div id="t_fin" class="t" style="left:612.80px;top:469.68px;font-size:11.4px;color:#ffffff;transform:scaleX(0.9773);-webkit-text-stroke:0.4px #fff;">Finish</div>
<div id="t_can" class="t" style="left:680.30px;top:469.68px;font-size:11.4px;color:#333333;transform:scaleX(0.9558);-webkit-text-stroke:0.4px #333;">Cancel</div>
<div id="botline" class="abs"></div>
<div id="winedge2" class="abs"></div>
<div id="winedge" class="abs"></div>
</body>
</html>
